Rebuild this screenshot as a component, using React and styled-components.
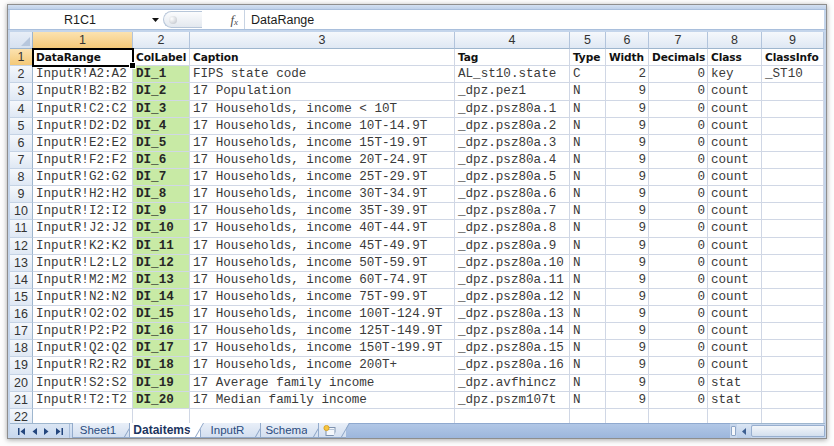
import React from "react";
import styled, { createGlobalStyle, css } from "styled-components";

const GlobalStyle = createGlobalStyle`
  html, body { margin: 0; padding: 0; background: #ffffff; }
  #root { width: 834px; height: 446px; overflow: hidden; }
`;

const Page = styled.div`
  width: 834px;
  height: 446px;
  padding: 4px 0 0 7px;
  box-sizing: border-box;
  background: #fdfdfd;
`;

const Window = styled.div`
  width: 820px;
  height: 435px;
  box-sizing: border-box;
  border: 1px solid #8e8e8e;
  background: #c4d5eb;
  box-shadow: 0 1px 5px rgba(0, 0, 0, 0.35);
  display: flex;
  flex-direction: column;
`;

const TopStrip = styled.div`
  height: 5px;
  flex: none;
  background: linear-gradient(#d3e0f1, #bfd1ea);
  border-bottom: 1px solid #a9bfdc;
  box-sizing: border-box;
`;

const FormulaBar = styled.div`
  height: 19px;
  flex: none;
  margin: 0 2px;
  display: flex;
  align-items: stretch;
  background: #ffffff;
  font-family: "Liberation Sans", Arial, sans-serif;
  font-size: 12.5px;
  color: #1b1b1b;
`;

const NameBox = styled.div`
  width: 136px;
  display: flex;
  align-items: center;
  justify-content: center;
  padding-left: 2px;
`;

const DropArrow = styled.div`
  width: 14px;
  display: flex;
  align-items: center;
  justify-content: center;
  svg { display: block; }
`;

const Pill = styled.div`
  width: 39px;
  margin: 1px 0 1px 1px;
  border-radius: 9px 0 0 9px;
  border: 1px solid #b7c6d9;
  border-right: none;
  background: linear-gradient(#fbfcfd, #e3e8ef);
  display: flex;
  align-items: center;
  padding-left: 5px;
  box-sizing: border-box;
`;

const Knob = styled.div`
  width: 8px;
  height: 8px;
  border-radius: 50%;
  background: radial-gradient(circle at 35% 35%, #ffffff, #b9bec6);
`;

const FxBox = styled.div`
  width: 43px;
  display: flex;
  align-items: center;
  justify-content: flex-end;
  padding-right: 6px;
  box-sizing: border-box;
  border-right: 1px solid #c7d3e3;
  font-family: "Liberation Serif", "Times New Roman", serif;
  font-style: italic;
  color: #4d4d4d;
  font-size: 13px;
  span { font-size: 9px; margin-top: 4px; }
`;

const FormulaText = styled.div`
  flex: 1;
  display: flex;
  align-items: center;
  padding-left: 6px;
`;

const GapStrip = styled.div`
  height: 3px;
  flex: none;
  background: #c4d5eb;
  border-top: 1px solid #a9bfdc;
  box-sizing: border-box;
`;

const Sheet = styled.div`
  flex: 1;
  min-height: 0;
  overflow: hidden;
  margin: 0 2px;
  background: #ffffff;
`;

const Grid = styled.div`
  display: grid;
  grid-template-columns: 23px 100px 57px 265px 115px 36px 43px 59px 54px 62px;
  grid-auto-rows: 17.14px;
`;

const headerBg = css`
  background: ${(p) =>
    p.$selected
      ? "linear-gradient(#fbe2b0, #f4c978)"
      : "linear-gradient(#f5f8fc, #dfe8f4)"};
`;

const Corner = styled.div`
  position: relative;
  background: linear-gradient(#e8eef7, #d6e1f0);
  border-right: 1px solid #9eb6ce;
  border-bottom: 1px solid #9eb6ce;
  box-sizing: border-box;
  &::after {
    content: "";
    position: absolute;
    right: 2px;
    bottom: 2px;
    border-style: solid;
    border-width: 0 0 9px 9px;
    border-color: transparent transparent #b7c7dd transparent;
  }
`;

const ColHeader = styled.div`
  ${headerBg};
  border-right: 1px solid #b2c4dc;
  border-bottom: 1px solid #9eb6ce;
  box-sizing: border-box;
  display: flex;
  align-items: center;
  justify-content: center;
  font-family: "Liberation Sans", Arial, sans-serif;
  font-size: 12.5px;
  color: #333;
`;

const RowHeader = styled.div`
  ${headerBg};
  border-right: 1px solid #9eb6ce;
  border-bottom: 1px solid #c5d3e5;
  box-sizing: border-box;
  display: flex;
  align-items: center;
  justify-content: center;
  font-family: "Liberation Sans", Arial, sans-serif;
  font-size: 12.5px;
  color: #333;
`;

const fonts = {
  mono: css`
    font-family: "Liberation Mono", "Courier New", monospace;
    font-size: 12.6px;
    color: #3a3a3a;
  `,
  monoBold: css`
    font-family: "Liberation Mono", "Courier New", monospace;
    font-size: 12.6px;
    font-weight: bold;
    color: #262626;
  `,
  head: css`
    font-family: "DejaVu Sans", Verdana, sans-serif;
    font-size: 10.6px;
    font-weight: bold;
    color: #111;
    letter-spacing: -0.1px;
  `,
};

const Cell = styled.div`
  position: relative;
  box-sizing: border-box;
  border-right: 1px solid #d0d7e5;
  border-bottom: 1px solid #d0d7e5;
  background: ${(p) => (p.$green ? "#c8eaa5" : "#ffffff")};
  display: flex;
  align-items: center;
  justify-content: ${(p) => (p.$right ? "flex-end" : "flex-start")};
  padding: 0 2px 0 3px;
  white-space: pre;
  overflow: visible;
  ${(p) => fonts[p.$font || "mono"]};
  ${(p) =>
    p.$active &&
    css`
      outline: 2px solid #000;
      outline-offset: -1px;
      z-index: 2;
      &::after {
        content: "";
        position: absolute;
        right: -4px;
        bottom: -4px;
        width: 5px;
        height: 5px;
        background: #000;
        border: 1px solid #fff;
      }
    `}
`;

const TabBar = styled.div`
  height: 15px;
  flex: none;
  display: flex;
  align-items: stretch;
  margin: 0 1px 0 2px;
  background: linear-gradient(#dbe6f4, #c7d7ee);
  border-top: 1px solid #9eb6ce;
  box-sizing: border-box;
  font-family: "Liberation Sans", Arial, sans-serif;
`;

const NavArea = styled.div`
  width: 60px;
  display: flex;
  align-items: center;
  justify-content: space-around;
  padding: 0 2px 0 4px;
  box-sizing: border-box;
  border-right: 1px solid #a9bedb;
  svg { display: block; }
`;

const Tabs = styled.div`
  display: flex;
  align-items: stretch;
  padding-left: 2px;
`;

const Tab = styled.div`
  position: relative;
  width: ${(p) => p.$w}px;
  box-sizing: border-box;
  display: flex;
  align-items: center;
  justify-content: center;
  padding-right: 6px;
  font-size: ${(p) => (p.$active ? "12px" : "11.5px")};
  font-weight: ${(p) => (p.$active ? "bold" : "normal")};
  color: ${(p) => (p.$active ? "#1b355f" : "#2b4c80")};
  background: ${(p) =>
    p.$active ? "#ffffff" : "linear-gradient(#e9eff8, #d3dff0)"};
  border-left: 1px solid #93abcc;
  border-bottom: 1px solid #93abcc;
  z-index: ${(p) => (p.$active ? 2 : 1)};
  margin-top: -1px;
  &::after {
    content: "";
    position: absolute;
    top: 0;
    right: -4px;
    width: 8px;
    height: 100%;
    background: inherit;
    border-right: 1px solid #8aa3c6;
    transform-origin: top;
    transform: skewX(-30deg);
  }
`;

const Filler = styled.div`
  flex: 1;
  background: linear-gradient(#b1c7e6, #9cb6dc);
  border-top: 1px solid #8fa9cf;
  margin-top: -1px;
`;

const Scroll = styled.div`
  width: 95px;
  display: flex;
  align-items: stretch;
  background: #c6d6ec;
`;

const Splitter = styled.div`
  width: 5px;
  margin: 2px 1px;
  border: 1px solid #8ea6c7;
  border-radius: 1px;
  background: #f6f8fb;
  box-sizing: border-box;
`;

const ArrowBtn = styled.div`
  width: 14px;
  display: flex;
  align-items: center;
  justify-content: center;
  background: linear-gradient(#dbe6f4, #b9cde8);
  svg { display: block; }
`;

const Thumb = styled.div`
  flex: 1;
  margin: 1px 0;
  border: 1px solid #98afcf;
  border-radius: 2px 0 0 2px;
  background: linear-gradient(#f3f6fa, #d3dfee);
`;

const incomes = [
  "< 10T",
  "10T-14.9T",
  "15T-19.9T",
  "20T-24.9T",
  "25T-29.9T",
  "30T-34.9T",
  "35T-39.9T",
  "40T-44.9T",
  "45T-49.9T",
  "50T-59.9T",
  "60T-74.9T",
  "75T-99.9T",
  "100T-124.9T",
  "125T-149.9T",
  "150T-199.9T",
  "200T+",
];

const letters = "ABCDEFGHIJKLMNOPQRST".split("");

const buildRows = () => {
  const r = [];
  r.push(["InputR!A2:A2", "DI_1", "FIPS state code", "AL_st10.state", "C", "2", "0", "key", "_ST10"]);
  r.push(["InputR!B2:B2", "DI_2", "17 Population", "_dpz.pez1", "N", "9", "0", "count", ""]);
  incomes.forEach((inc, i) => {
    const L = letters[i + 2];
    r.push([
      `InputR!${L}2:${L}2`,
      `DI_${i + 3}`,
      `17 Households, income ${inc}`,
      `_dpz.psz80a.${i + 1}`,
      "N",
      "9",
      "0",
      "count",
      "",
    ]);
  });
  r.push(["InputR!S2:S2", "DI_19", "17 Average family income", "_dpz.avfhincz", "N", "9", "0", "stat", ""]);
  r.push(["InputR!T2:T2", "DI_20", "17 Median family income", "_dpz.pszm107t", "N", "9", "0", "stat", ""]);
  r.push(["", "", "", "", "", "", "", "", ""]);
  return r;
};

const headers = ["DataRange", "ColLabel", "Caption", "Tag", "Type", "Width", "Decimals", "Class", "ClassInfo"];

const Tri = ({ dir, bar }) => (
  <svg width={bar ? 7 : 5} height="7" viewBox={bar ? "0 0 7 7" : "0 0 5 7"}>
    {dir === "left" ? (
      <>
        {bar && <rect x="0" y="0" width="1.5" height="7" fill="#23457d" />}
        <polygon points={bar ? "7,0 7,7 2.5,3.5" : "5,0 5,7 0.5,3.5"} fill="#23457d" />
      </>
    ) : (
      <>
        <polygon points="0,0 0,7 4.5,3.5" fill="#23457d" />
        {bar && <rect x="5.5" y="0" width="1.5" height="7" fill="#23457d" />}
      </>
    )}
  </svg>
);

export default function App() {
  const rows = buildRows();
  return (
    <>
      <GlobalStyle />
      <Page>
        <Window>
          <TopStrip />
          <FormulaBar>
            <NameBox>R1C1</NameBox>
            <DropArrow>
              <svg width="7" height="4" viewBox="0 0 7 4">
                <polygon points="0,0 7,0 3.5,4" fill="#111" />
              </svg>
            </DropArrow>
            <Pill>
              <Knob />
            </Pill>
            <FxBox>
              f<span>x</span>
            </FxBox>
            <FormulaText>DataRange</FormulaText>
          </FormulaBar>
          <GapStrip />
          <Sheet>
            <Grid>
              <Corner />
              {[1, 2, 3, 4, 5, 6, 7, 8, 9].map((n) => (
                <ColHeader key={n} $selected={n === 1}>
                  {n}
                </ColHeader>
              ))}
              <RowHeader $selected>1</RowHeader>
              {headers.map((h, i) => (
                <Cell key={h} $font="head" $active={i === 0}>
                  {h}
                </Cell>
              ))}
              {rows.map((row, ri) => (
                <React.Fragment key={ri}>
                  <RowHeader>{ri + 2}</RowHeader>
                  {row.map((v, ci) => (
                    <Cell
                      key={ci}
                      $font={ci === 1 ? "monoBold" : "mono"}
                      $green={ci === 1 && ri < 20}
                      $right={ci === 5 || ci === 6}
                    >
                      {v}
                    </Cell>
                  ))}
                </React.Fragment>
              ))}
            </Grid>
          </Sheet>
          <TabBar>
            <NavArea>
              <Tri dir="left" bar />
              <Tri dir="left" />
              <Tri dir="right" />
              <Tri dir="right" bar />
            </NavArea>
            <Tabs>
              <Tab $w={57}>Sheet1</Tab>
              <Tab $w={71} $active>
                Dataitems
              </Tab>
              <Tab $w={60}>InputR</Tab>
              <Tab $w={58}>Schema</Tab>
              <Tab $w={28}>
                <svg width="14" height="11" viewBox="0 0 14 11">
                  <rect x="3" y="2.5" width="9" height="8" fill="#f4f7fb" stroke="#7f93b0" strokeWidth="1" />
                  <path d="M3.5 4.5 L11.5 4.5" stroke="#b8c6d9" />
                  <circle cx="3.5" cy="3" r="2.6" fill="#f6c542" stroke="#d49a16" strokeWidth="0.8" />
                </svg>
              </Tab>
            </Tabs>
            <Filler />
            <Scroll>
              <Splitter />
              <ArrowBtn>
                <svg width="4" height="7" viewBox="0 0 4 7">
                  <polygon points="4,0 4,7 0,3.5" fill="#3d5f91" />
                </svg>
              </ArrowBtn>
              <Thumb />
            </Scroll>
          </TabBar>
        </Window>
      </Page>
    </>
  );
}
